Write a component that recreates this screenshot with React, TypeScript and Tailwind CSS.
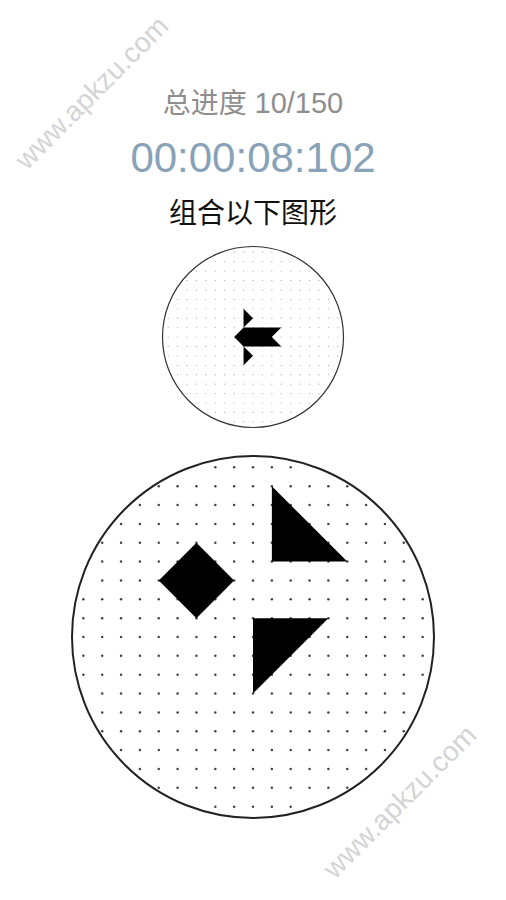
import { FC } from "react";

const BIG = { size: 364, r: 181, step: 18.85 };
const SMALL = { size: 184, r: 90.5, step: 9.425 };

// points in grid units, relative to circle center
const bigPieces = [
  [[-3, -5], [-1, -3], [-3, -1], [-5, -3]],
  [[1, -8], [1, -4], [5, -4]],
  [[0, -1], [4, -1], [0, 3]],
];

const smallPieces = [
  [[-2, 0], [-1, -1], [3, -1], [2, 0], [3, 1], [-1, 1]],
  [[-1, -3], [0, -2], [-1, -1]],
  [[-1, 1], [0, 2], [-1, 3]],
];

function gridDots(size: number, r: number, step: number) {
  const c = size / 2;
  const n = Math.ceil(r / step);
  const dots: [number, number][] = [];
  for (let i = -n; i <= n; i++) {
    for (let j = -n; j <= n; j++) {
      const x = i * step;
      const y = j * step;
      if (Math.sqrt(x * x + y * y) < r - 3) dots.push([c + x, c + y]);
    }
  }
  return dots;
}

const Board: FC<{
  cfg: typeof BIG;
  pieces: number[][][];
  dotR: number;
  dotFill: string;
  stroke: number;
  strokeColor: string;
}> = ({ cfg, pieces, dotR, dotFill, stroke, strokeColor }) => {
  const c = cfg.size / 2;
  const dots = gridDots(cfg.size, cfg.r, cfg.step);
  return (
    <svg width={cfg.size} height={cfg.size} viewBox={`0 0 ${cfg.size} ${cfg.size}`}>
      <circle cx={c} cy={c} r={cfg.r} fill="#fff" stroke={strokeColor} strokeWidth={stroke} />
      {dots.map(([x, y], i) => (
        <circle key={i} cx={x} cy={y} r={dotR} fill={dotFill} />
      ))}
      {pieces.map((p, i) => (
        <polygon
          key={i}
          points={p.map(([x, y]) => `${c + x * cfg.step},${c + y * cfg.step}`).join(" ")}
          fill="#000"
        />
      ))}
    </svg>
  );
};

const Watermark: FC<{ pos: string }> = ({ pos }) => (
  <div
    className={`absolute ${pos} -translate-x-1/2 -translate-y-1/2 -rotate-45 whitespace-nowrap text-[28px] leading-none text-[#d4d4d4] font-['Liberation_Sans',sans-serif] pointer-events-none`}
  >
    www.apkzu.com
  </div>
);

export default function App() {
  return (
    <div className="relative w-[506px] h-[900px] bg-white overflow-hidden font-['Liberation_Sans','Noto_Sans_CJK_SC',sans-serif]">
      <div className="flex flex-col items-center pt-[85px]">
        <div className="text-[28px] leading-[36px] text-[#8e8e8e]">
          总进度 <span className="text-[29px]">10/150</span>
        </div>
        <div className="mt-[12px] text-[42px] leading-[48px] text-[#88a2b7]">00:00:08:102</div>
        <div className="mt-[14px] text-[28px] leading-[36px] text-[#111]">组合以下图形</div>
        <div className="mt-[13px]">
          <Board cfg={SMALL} pieces={smallPieces} dotR={0.6} dotFill="#a8a8a8" stroke={1.2} strokeColor="#333" />
        </div>
        <div className="mt-[26px]">
          <Board cfg={BIG} pieces={bigPieces} dotR={1.25} dotFill="#444" stroke={2} strokeColor="#222" />
        </div>
      </div>
      <Watermark pos="left-[92px] top-[93px]" />
      <Watermark pos="left-[400px] top-[802px]" />
    </div>
  );
}
